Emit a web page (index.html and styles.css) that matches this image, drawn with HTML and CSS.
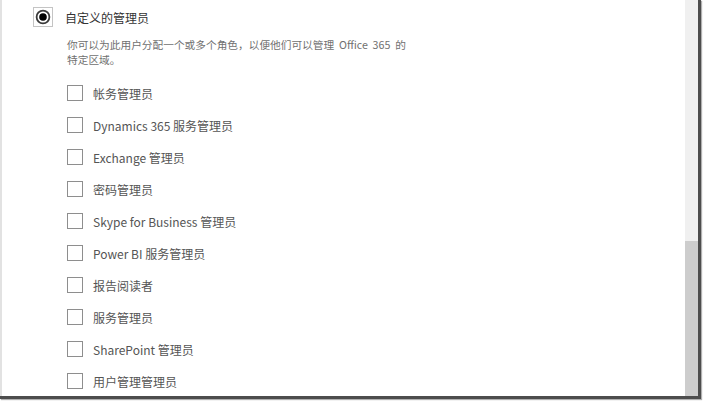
FILE: index.html
```html
<!DOCTYPE html>
<html lang="zh-CN">
<head>
<meta charset="utf-8">
<link rel="stylesheet" href="styles.css">
</head>
<body>
<div class="frame">
  <div class="content">
    <div class="option">
      <span class="radio-focus">
        <svg width="20" height="20" viewBox="0 0 20 20">
          <rect x="0.5" y="0.5" width="19" height="19" fill="none" stroke="#888" stroke-width="1" stroke-dasharray="1 1"/>
          <circle cx="10" cy="10" r="6.4" fill="#fff" stroke="#3a3a3a" stroke-width="1.8"/>
          <circle cx="10" cy="10" r="3.8" fill="#000"/>
        </svg>
      </span>
      <span class="option-label">自定义的管理员</span>
    </div>
    <p class="desc">你可以为此用户分配一个或多个角色，以便他们可以管理&nbsp; Office&nbsp; 365&nbsp; 的<br>特定区域。</p>
    <ul class="roles">
      <li class="role"><span class="box"></span><span class="role-label">帐务管理员</span></li>
      <li class="role"><span class="box"></span><span class="role-label">Dynamics 365 服务管理员</span></li>
      <li class="role"><span class="box"></span><span class="role-label">Exchange 管理员</span></li>
      <li class="role"><span class="box"></span><span class="role-label">密码管理员</span></li>
      <li class="role"><span class="box"></span><span class="role-label">Skype for Business 管理员</span></li>
      <li class="role"><span class="box"></span><span class="role-label">Power BI 服务管理员</span></li>
      <li class="role"><span class="box"></span><span class="role-label">报告阅读者</span></li>
      <li class="role"><span class="box"></span><span class="role-label">服务管理员</span></li>
      <li class="role"><span class="box"></span><span class="role-label">SharePoint 管理员</span></li>
      <li class="role"><span class="box"></span><span class="role-label">用户管理管理员</span></li>
    </ul>
  </div>
  <div class="scrollbar"><div class="thumb"></div></div>
</div>
</body>
</html>
```

FILE: styles.css
```css
html, body {
  margin: 0;
  padding: 0;
  background: #fff;
}
body {
  width: 704px;
  height: 401px;
  overflow: hidden;
  font-family: "Noto Sans CJK SC", "Open Sans", sans-serif;
}
.frame {
  width: 698px;
  height: 396px;
  display: flex;
  border-right: 3px solid #4d4d4d;
  border-bottom: 3px solid #4d4d4d;
  box-shadow: 1px 1px 1px #b0b0b0;
}
.content {
  flex: 1;
  border-left: 2px solid #e2e2e2;
  padding: 7px 0 0 31px;
  overflow: hidden;
}
.option {
  display: flex;
  align-items: center;
  height: 20px;
}
.radio-focus {
  display: flex;
  width: 20px;
  height: 20px;
}
.option-label {
  margin-left: 12px;
  font-size: 12px;
  color: #333;
}
.desc {
  margin: 10px 0 0 34px;
  font-size: 10.7px;
  line-height: 15px;
  color: #707070;
}
.roles {
  list-style: none;
  margin: 10px 0 0 34px;
  padding: 0;
}
.role {
  display: flex;
  align-items: center;
  height: 32px;
}
.box {
  width: 14px;
  height: 14px;
  border: 1px solid #8e8e8e;
  background: #fff;
  flex: none;
}
.role-label {
  margin-left: 10px;
  font-size: 12px;
  color: #555;
}
.scrollbar {
  width: 13px;
  background: #f0f0f0;
  display: flex;
  flex-direction: column;
  justify-content: flex-end;
}
.thumb {
  height: 155px;
  background: #cdcdcd;
}
```
